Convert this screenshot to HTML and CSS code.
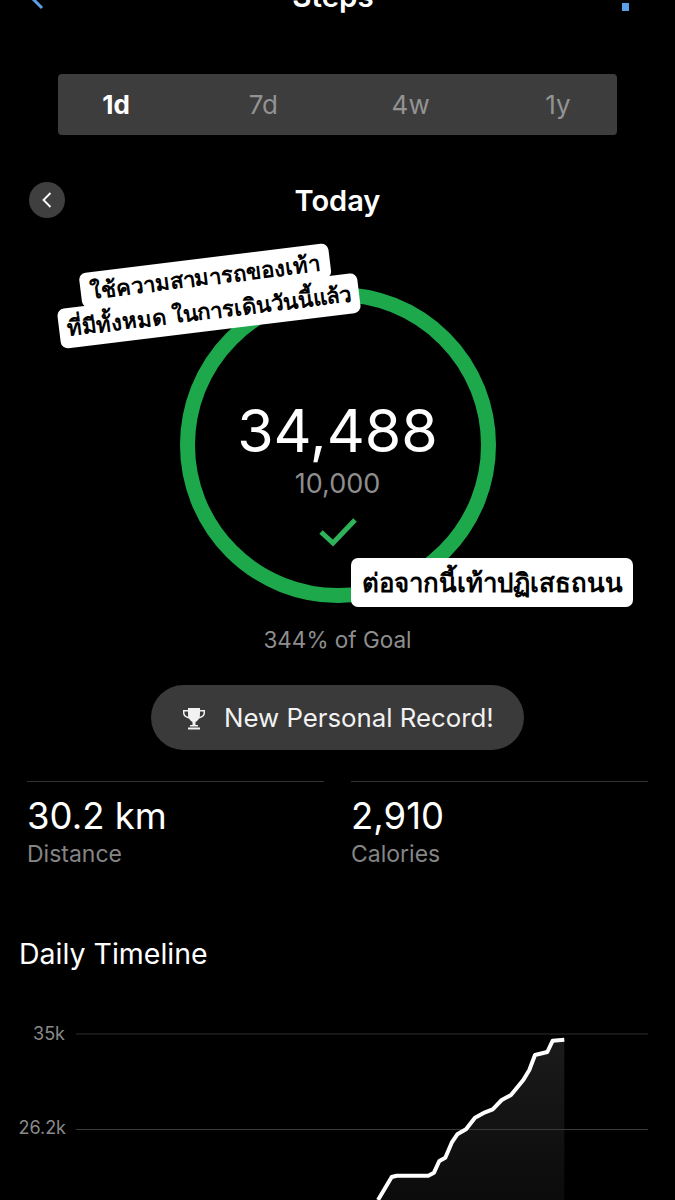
FILE: index.html
```html
<!DOCTYPE html>
<html lang="th">
<head>
<meta charset="utf-8">
<title>Steps</title>
<link rel="stylesheet" href="styles.css">
</head>
<body>
<div class="page">
  <header class="nav">
    <svg class="nav-back" width="16" height="24" viewBox="0 0 16 24"><path d="M14 22 L3 11 L14 0" fill="none" stroke="#5a9fe8" stroke-width="3"/></svg>
    <span class="nav-title">Steps</span>
    <span class="nav-dot"></span>
  </header>

  <nav class="tabs">
    <span class="tab tab-active">1d</span>
    <span class="tab">7d</span>
    <span class="tab">4w</span>
    <span class="tab">1y</span>
  </nav>

  <div class="date-row">
    <span class="round-btn">
      <svg width="12" height="18" viewBox="0 0 12 18"><path d="M9.500 2 L2.500 9 L9.500 16" fill="none" stroke="#fff" stroke-width="1.800"/></svg>
    </span>
    <span class="date">Today</span>
  </div>

  <section class="ring-area">
    <div class="ring">
      <span class="count">34,488</span>
      <span class="goal">10,000</span>
      <svg class="check" width="38" height="30" viewBox="0 0 38 30"><path d="M2 14 L14 25 L36 2" fill="none" stroke="#2eb35a" stroke-width="5"/></svg>
    </div>
    <div class="sticker sticker-top">
      <span class="sticker-line sticker-line-a">ใช้ความสามารถของเท้า</span>
      <span class="sticker-line sticker-line-b">ที่มีทั้งหมด ในการเดินวันนี้แล้ว</span>
    </div>
    <div class="sticker sticker-bottom">ต่อจากนี้เท้าปฏิเสธถนน</div>
  </section>

  <p class="percent">344% of Goal</p>

  <div class="record-wrap">
    <div class="record">
      <svg width="24" height="24" viewBox="0 0 24 24"><path d="M6 2 H18 V4 H23 V7 C23 10 20 12 17 12.500 C16 14.500 14.500 15.500 13.500 16 V19 H16 V20.500 H8 V19 H10.500 V16 C9.500 15.500 8 14.500 7 12.500 C4 12 1 10 1 7 V4 H6 Z M2.500 5.500 V7 C2.500 8.800 4.300 10.300 6.200 10.800 C6 9 6 7.200 6 5.500 Z M21.500 5.500 H18 C18 7.200 18 9 17.800 10.800 C19.700 10.300 21.500 8.800 21.500 7 Z M6 21.500 H18 V23.500 H6 Z" fill="#f2f2f2" fill-rule="evenodd"/></svg>
      <span>New Personal Record!</span>
    </div>
  </div>

  <section class="stats">
    <div class="stat">
      <div class="stat-value">30.2 km</div>
      <div class="stat-label">Distance</div>
    </div>
    <div class="stat">
      <div class="stat-value">2,910</div>
      <div class="stat-label">Calories</div>
    </div>
  </section>

  <h2 class="timeline-title">Daily Timeline</h2>

  <svg class="chart" width="675" height="190" viewBox="0 1010 675 190">
    <defs>
      <linearGradient id="area" x1="0" y1="0" x2="0" y2="1">
        <stop offset="0" stop-color="#1b1b1b"/>
        <stop offset="1" stop-color="#0b0b0b"/>
      </linearGradient>
    </defs>
    <path d="M378 1200 L391.700 1177 L396.700 1175.700 L428.300 1175.700 L434 1172.700 L439.300 1161 L445.300 1157.700 L451.700 1142.700 L457.300 1134.300 L466 1129.300 L475 1117.700 L485 1112.300 L492.700 1109.300 L501.700 1100 L511 1095 L523.300 1080 L529.300 1070 L535 1055 L547.300 1052 L552.700 1040.700 L564.300 1039.700 V1200 Z" fill="url(#area)"/>
    <line x1="76" y1="1034" x2="648" y2="1034" stroke="#2e2e2e" stroke-width="1"/>
    <line x1="76" y1="1129.500" x2="648" y2="1129.500" stroke="#3a3a3a" stroke-width="1"/>
    <text class="axis" x="65" y="1040">35k</text>
    <text class="axis" x="66" y="1134">26.2k</text>
    <path d="M378 1200 L391.700 1177 L396.700 1175.700 L428.300 1175.700 L434 1172.700 L439.300 1161 L445.300 1157.700 L451.700 1142.700 L457.300 1134.300 L466 1129.300 L475 1117.700 L485 1112.300 L492.700 1109.300 L501.700 1100 L511 1095 L523.300 1080 L529.300 1070 L535 1055 L547.300 1052 L552.700 1040.700 L564.300 1039.700" fill="none" stroke="#fff" stroke-width="4" stroke-linejoin="round"/>
  </svg>
</div>
</body>
</html>
```
FILE: styles.css
```css
* { box-sizing: border-box; }
html, body { margin: 0; padding: 0; background: #000; }
body { font-family: Inter, "Noto Sans", "DejaVu Sans", sans-serif; color: #fff; }
.page { width: 675px; height: 1200px; overflow: hidden; }

.nav { display: flex; justify-content: space-between; align-items: flex-end; height: 38px; margin-top: -24px; padding: 0 46px 0 28px; }
.nav-back { display: block; margin-bottom: 4px; }
.nav-title { font-size: 29.500px; font-weight: 600; line-height: 36px; }
.nav-dot { width: 7px; height: 8px; background: #5a9fe8; margin-bottom: 3px; }

.tabs { display: flex; justify-content: space-between; align-items: center; height: 61px; margin: 60px 58px 0; padding: 0 39px 0 38px; background: #3d3d3d; border-radius: 4px; }
.tab { width: 40px; text-align: center; font-size: 26px; color: #939393; }
.tab-active { color: #fff; font-weight: 700; }

.date-row { position: relative; display: flex; justify-content: center; align-items: center; height: 36px; margin-top: 47px; }
.round-btn { position: absolute; left: 29px; top: 0; display: flex; align-items: center; justify-content: center; width: 36px; height: 36px; border-radius: 50%; background: #3f3f3f; }
.date { font-size: 29px; font-weight: 600; }

.ring-area { position: relative; display: flex; justify-content: center; margin-top: 69px; }
.ring { display: flex; flex-direction: column; align-items: center; width: 316px; height: 316px; padding-top: 94px; border: 15px solid #1ca84b; border-radius: 50%; }
.count { font-size: 59px; line-height: 70px; color: #fff; }
.goal { font-size: 27px; line-height: 32px; margin-top: 2px; color: #8e8e8e; }
.check { margin-top: 18px; }

.sticker { position: absolute; color: #000; font-family: "Noto Sans", "DejaVu Sans", sans-serif; font-weight: 700; }
.sticker-top { left: 52px; top: -29px; width: 310px; display: flex; flex-direction: column; align-items: center; transform: rotate(-7deg); font-size: 22px; line-height: 30px; }
.sticker-line { background: #fff; border-radius: 7px; white-space: nowrap; }
.sticker-line-a { padding: 3px 10px 2px; }
.sticker-line-b { padding: 4px 8px 6px; margin-top: -2px; }
.sticker-bottom { left: 351px; top: 271px; width: 282px; height: 49px; display: flex; align-items: center; justify-content: center; background: #fff; border-radius: 7px; font-size: 25.800px; white-space: nowrap; }

.percent { margin: 23px 0 0; text-align: center; font-size: 22.500px; line-height: 28px; color: #8e8e8e; }

.record-wrap { display: flex; justify-content: center; margin-top: 31px; }
.record { display: flex; align-items: center; gap: 18px; width: 373px; height: 65px; padding-left: 31px; border-radius: 33px; background: #3a3a3a; font-size: 25.800px; color: #f2f2f2; }

.stats { display: grid; grid-template-columns: 297px 297px; column-gap: 27px; margin: 31px 0 0 27px; }
.stat { border-top: 1px solid #333; padding-top: 12px; }
.stat-value { font-size: 36.500px; line-height: 44px; }
.stat-label { font-size: 23px; line-height: 30px; margin-top: 1px; color: #858585; }

.timeline-title { margin: 68px 0 0 19px; font-size: 28.500px; font-weight: 400; line-height: 34px; }

.chart { display: block; margin-top: 39px; }
.axis { font-size: 18px; fill: #8a8a8a; text-anchor: end; font-family: Inter, sans-serif; }
```
